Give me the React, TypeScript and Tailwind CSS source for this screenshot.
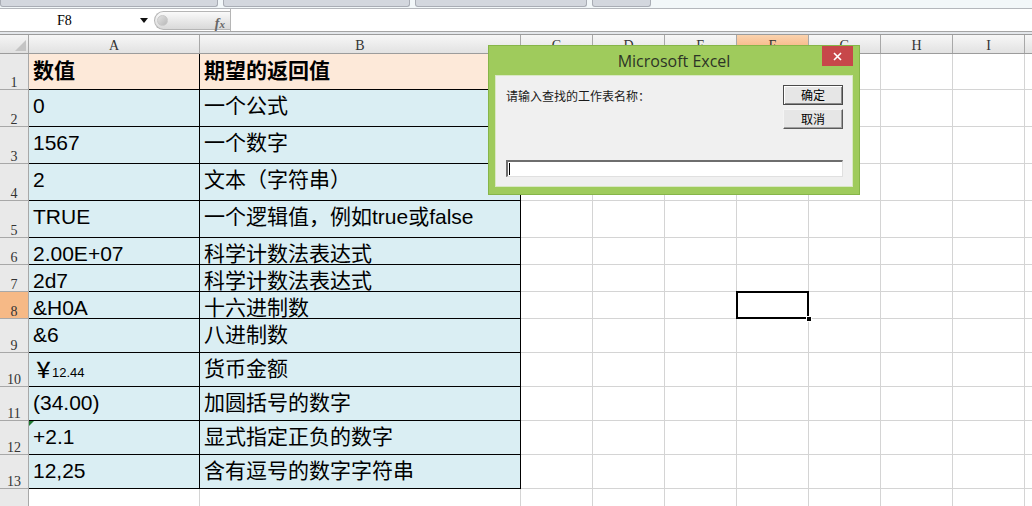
import React from 'react';

interface Row {
  num: number;
  h: string;
  a?: React.ReactNode;
  b?: string;
  head?: boolean;
  flag?: boolean;
}

const sans = "font-['Liberation_Sans','Noto_Sans_CJK_SC',sans-serif]";
const serif = "font-['Liberation_Serif','Noto_Sans_CJK_SC',serif]";
const cjk = "font-['Noto_Sans_CJK_SC','Liberation_Sans',sans-serif]";

const cols = ['C', 'D', 'E', 'F', 'G', 'H', 'I'];

const rows: Row[] = [
  { num: 1, h: 'h-[36px]', a: '数值', b: '期望的返回值', head: true },
  { num: 2, h: 'h-[37px]', a: '0', b: '一个公式' },
  { num: 3, h: 'h-[37px]', a: '1567', b: '一个数字' },
  { num: 4, h: 'h-[37px]', a: '2', b: '文本（字符串）' },
  { num: 5, h: 'h-[37px]', a: 'TRUE', b: '一个逻辑值，例如true或false' },
  { num: 6, h: 'h-[27px]', a: '2.00E+07', b: '科学计数法表达式' },
  { num: 7, h: 'h-[27px]', a: '2d7', b: '科学计数法表达式' },
  { num: 8, h: 'h-[27px]', a: '&H0A', b: '十六进制数' },
  { num: 9, h: 'h-[34px]', a: '&6', b: '八进制数' },
  {
    num: 10,
    h: 'h-[34px]',
    a: (
      <>
        <span className={`${cjk} font-medium`}>￥</span>
        <span className="text-[13px] -ml-[2px]">12.44</span>
      </>
    ),
    b: '货币金额',
  },
  { num: 11, h: 'h-[34px]', a: '(34.00)', b: '加圆括号的数字' },
  { num: 12, h: 'h-[34px]', a: '+2.1', b: '显式指定正负的数字', flag: true },
  { num: 13, h: 'h-[34px]', a: '12,25', b: '含有逗号的数字字符串' },
  { num: 14, h: 'h-[34px]' },
];

function SheetRow({ row }: { row: Row }) {
  const inTable = row.num <= 13;
  const fill = row.num === 1 ? 'bg-[#fde9d9]' : inTable ? 'bg-[#daeef3]' : 'bg-white';
  const line = inTable ? 'border-black' : 'border-[#d4d4d4]';
  const weight = row.head ? `font-bold ${cjk}` : sans;

  return (
    <div className={`flex shrink-0 ${row.h}`}>
      <div
        className={`w-[29px] shrink-0 flex items-end justify-center border-r border-b border-[#a8a8a8] text-[14px] leading-[12px] text-[#333] ${serif} ${
          row.num === 8 ? 'bg-[#f6b986]' : 'bg-[#e9e9e9]'
        }`}
      >
        {row.num < 14 ? row.num : ''}
      </div>
      <div
        className={`relative w-[171px] shrink-0 border-r border-b ${line} ${fill} pl-[4px] pt-[3px] text-[21px] leading-[25px] text-black whitespace-nowrap ${weight}`}
      >
        {row.flag && (
          <div className="absolute left-0 top-0 w-0 h-0 border-t-[5px] border-r-[5px] border-t-[#1f7a33] border-r-transparent" />
        )}
        {row.a}
      </div>
      <div
        className={`w-[321px] shrink-0 border-r border-b ${line} ${fill} pl-[4px] pt-[3px] text-[21px] leading-[25px] text-black whitespace-nowrap ${weight}`}
      >
        {row.b}
      </div>
      {cols.map((c) => (
        <div key={c} className="relative w-[72px] shrink-0 border-r border-b border-[#d4d4d4] bg-white">
          {row.num === 8 && c === 'F' && (
            <>
              <div className="absolute -inset-[1px] border-2 border-black z-[1]" />
              <div className="absolute -right-[4px] -bottom-[4px] w-[6px] h-[6px] bg-black border border-white z-[2]" />
            </>
          )}
        </div>
      ))}
      <div className="flex-1 border-b border-[#d4d4d4] bg-white" />
    </div>
  );
}

function Dialog() {
  return (
    <div className="absolute left-[488px] top-[45px] w-[372px] h-[150px] z-10 flex flex-col bg-[#9fcb5c] border border-[#86b548] px-[6px] pb-[7px]">
      <div className="relative h-[29px] shrink-0 flex items-center justify-center">
        <span className="font-['Open_Sans','Noto_Sans',sans-serif] text-[16px] text-[#2d3426] pt-[1px]">Microsoft Excel</span>
        <div className="absolute right-0 top-0 w-[31px] h-[20px] bg-[#c7474a] flex items-center justify-center">
          <svg width="9" height="9" viewBox="0 0 9 9">
            <path d="M1 1 L8 8 M8 1 L1 8" stroke="white" strokeWidth="1.6" />
          </svg>
        </div>
      </div>
      <div className="flex-1 bg-[#f0f0f0] border border-[#d9e8c4] flex flex-col pl-[10px] pr-[9px] pt-[9px] pb-[9px]">
        <div className="flex justify-between">
          <span className={`${cjk} text-[12px] leading-[16px] text-[#1a1a1a] mt-[3px]`}>请输入查找的工作表名称：</span>
          <div className="flex flex-col gap-[4px]">
            <button className={`w-[60px] h-[20px] ${cjk} text-[12px] leading-none text-black bg-[#e6e6e6] border border-[#4a4a4a] shadow-[inset_1px_1px_0_#ffffff,inset_-1px_-1px_0_#8a8a8a]`}>
              确定
            </button>
            <button className={`w-[60px] h-[20px] ${cjk} text-[12px] leading-none text-black bg-[#e6e6e6] border border-t-[#f4f4f4] border-l-[#f4f4f4] border-r-[#5a5a5a] border-b-[#5a5a5a] shadow-[inset_-1px_-1px_0_#a0a0a0]`}>
              取消
            </button>
          </div>
        </div>
        <div className="mt-auto h-[17px] bg-white border-t-2 border-l-2 border-[#6e6e6e] border-r border-b border-r-[#e0e0e0] border-b-[#e0e0e0] flex items-center pl-[1px]">
          <div className="w-px h-[12px] bg-black" />
        </div>
      </div>
    </div>
  );
}

export default function App() {
  return (
    <div className="relative w-[1032px] h-[506px] overflow-hidden bg-white flex flex-col">
      {/* ribbon remnants */}
      <div className="h-[9px] shrink-0 flex items-start bg-[#f2f7f9] border-b border-[#b4b7bc]">
        <div className="w-[218px] h-[7px] bg-[#d3d7de] border border-t-0 border-[#a9adb5] rounded-b-[3px]" />
        <div className="ml-[5px] w-[187px] h-[7px] bg-[#d3d7de] border border-t-0 border-[#a9adb5] rounded-b-[3px]" />
        <div className="ml-[5px] w-[172px] h-[7px] bg-[#d3d7de] border border-t-0 border-[#a9adb5] rounded-b-[3px]" />
        <div className="ml-[5px] w-[59px] h-[7px] bg-[#d3d7de] border border-t-0 border-[#a9adb5] rounded-b-[3px]" />
      </div>

      {/* formula bar */}
      <div className="h-[23px] shrink-0 flex bg-white border-b border-[#a5a5a5]">
        <div className="w-[154px] shrink-0 relative flex items-center">
          <span className={`absolute left-[57px] text-[14px] text-black ${serif}`}>F8</span>
          <svg className="absolute left-[140px] top-[9px]" width="8" height="5" viewBox="0 0 8 5">
            <path d="M0 0 H8 L4 5 Z" fill="#111" />
          </svg>
        </div>
        <div className="w-[76px] shrink-0 mt-[2px] mb-[1px] relative rounded-l-full border border-r-0 border-[#b5b5b5] bg-linear-to-b from-[#fafafa] to-[#d9d9d9] flex items-center">
          <div className="ml-[2px] w-[11px] h-[11px] rounded-full bg-linear-to-br from-[#e2e2e2] to-[#b9b9b9] border border-[#c9c9c9]" />
          <span className="absolute right-[5px] top-[1px] font-['Liberation_Serif',serif] italic font-bold text-[14px] text-[#666]">
            f<span className="text-[11px]">x</span>
          </span>
        </div>
        <div className="flex-1 border-l border-[#b5b5b5] bg-white" />
      </div>
      <div className="h-[2px] shrink-0 bg-[#e4e7eb]" />

      {/* column header */}
      <div className={`h-[20px] shrink-0 flex border-t border-b border-[#9c9c9c] text-[14px] leading-[12px] text-[#333] ${serif}`}>
        <div className="relative w-[29px] shrink-0 border-r border-[#a8a8a8] bg-linear-to-b from-[#f5f5f5] to-[#e0e0e0]">
          <svg className="absolute right-[2px] bottom-[2px]" width="11" height="11" viewBox="0 0 11 11">
            <path d="M11 0 V11 H0 Z" fill="#c4c4c4" />
          </svg>
        </div>
        <div className="w-[171px] shrink-0 flex items-end justify-center pb-[1px] border-r border-[#a8a8a8] bg-linear-to-b from-[#f7f7f7] to-[#e2e2e2]">A</div>
        <div className="w-[321px] shrink-0 flex items-end justify-center pb-[1px] border-r border-[#a8a8a8] bg-linear-to-b from-[#f7f7f7] to-[#e2e2e2]">B</div>
        {cols.map((c) => (
          <div
            key={c}
            className={`w-[72px] shrink-0 flex items-end justify-center pb-[1px] border-r border-[#a8a8a8] bg-linear-to-b ${
              c === 'F' ? 'from-[#fbd3ae] to-[#f4ad77]' : 'from-[#f7f7f7] to-[#e2e2e2]'
            }`}
          >
            {c}
          </div>
        ))}
        <div className="flex-1 bg-linear-to-b from-[#f7f7f7] to-[#e2e2e2]" />
      </div>

      {/* cells */}
      <div className="flex flex-col">
        {rows.map((r) => (
          <SheetRow key={r.num} row={r} />
        ))}
      </div>

      <Dialog />
    </div>
  );
}
